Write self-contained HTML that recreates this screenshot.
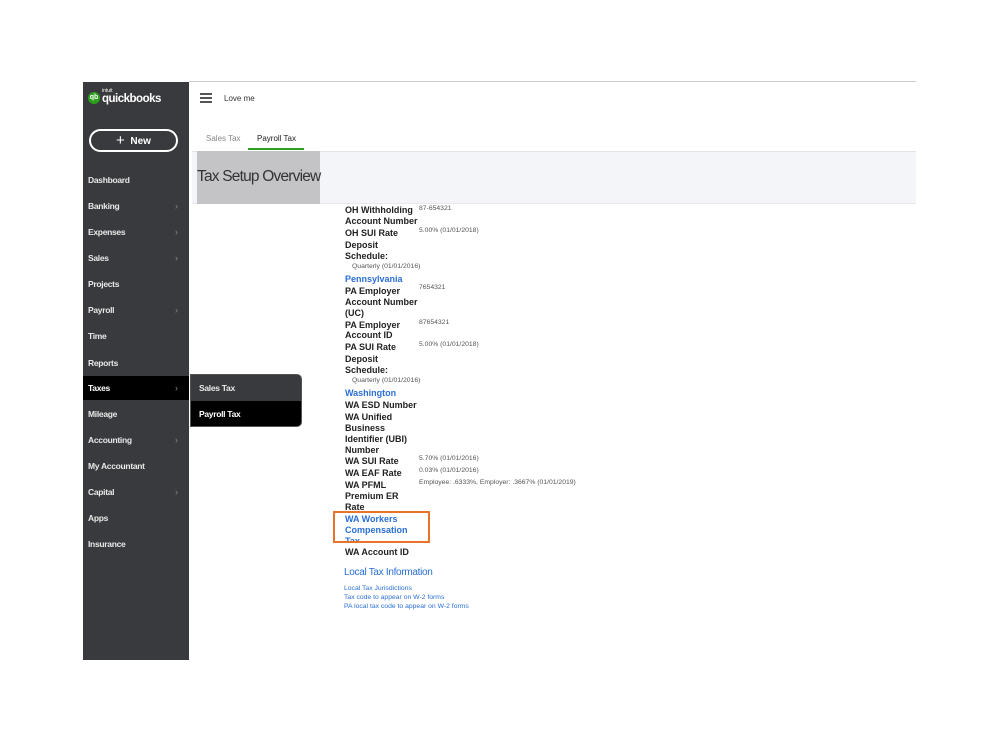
<!DOCTYPE html>
<html><head><meta charset="utf-8"><style>
*{margin:0;padding:0;box-sizing:border-box}
body{width:999px;height:749px;background:#fff;position:relative;overflow:hidden;font-family:"Liberation Sans",sans-serif}
.a{position:absolute;white-space:nowrap}
.sb{position:absolute;left:83px;top:82px;width:106px;height:578px;background:#393a3d}
.si{position:absolute;left:88px;color:#e8e8e8;font-size:8.5px;font-weight:bold;line-height:12px;letter-spacing:-0.3px}
.ch{position:absolute;left:175px;color:#888;font-size:9px;line-height:12px}
.l{position:absolute;left:345px;font-size:9px;font-weight:bold;color:#222;line-height:12px;letter-spacing:0px}
.v{position:absolute;left:419px;font-size:6.8px;color:#555;line-height:10px}
.q{position:absolute;left:352px;font-size:6.8px;color:#555;line-height:10px}
.b{position:absolute;left:345px;font-size:9px;font-weight:bold;color:#2a6fd6;line-height:12px}
.lk{position:absolute;left:344px;font-size:6.8px;color:#2a6fd6;line-height:9px}
</style></head><body>
<div class="a" style="left:189px;top:81px;width:727px;height:1px;background:#ccc"></div>
<div class="sb"></div>
<div class="a" style="left:88px;top:92px;width:12px;height:12px;border-radius:50%;background:#2ca01c;color:#fff;font-size:7px;font-weight:bold;text-align:center;line-height:12px">qb</div>
<div class="a" style="left:102px;top:88px;color:#fff;font-size:5px">intuit</div>
<div class="a" style="left:102px;top:93px;color:#fff;font-size:11.5px;font-weight:bold;letter-spacing:-0.5px">quickbooks</div>
<div class="a" style="left:89px;top:129px;width:89px;height:23px;border:2px solid #fff;border-radius:12px;color:#fff;font-size:10px;font-weight:bold;text-align:center;line-height:19px"><span style="font-size:15px;font-weight:normal;vertical-align:-1px">+</span>&nbsp; New</div>
<div class="si" style="top:174px">Dashboard</div>
<div class="si" style="top:200px">Banking</div><div class="ch" style="top:200px">›</div>
<div class="si" style="top:226px">Expenses</div><div class="ch" style="top:226px">›</div>
<div class="si" style="top:252px">Sales</div><div class="ch" style="top:252px">›</div>
<div class="si" style="top:278px">Projects</div>
<div class="si" style="top:304px">Payroll</div><div class="ch" style="top:304px">›</div>
<div class="si" style="top:330px">Time</div>
<div class="si" style="top:357px">Reports</div>
<div class="a" style="left:83px;top:376px;width:106px;height:24px;background:#000"></div>
<div class="si" style="top:382px;color:#fff">Taxes</div><div class="ch" style="top:382px">›</div>
<div class="si" style="top:408px">Mileage</div>
<div class="si" style="top:434px">Accounting</div><div class="ch" style="top:434px">›</div>
<div class="si" style="top:460px">My Accountant</div>
<div class="si" style="top:486px">Capital</div><div class="ch" style="top:486px">›</div>
<div class="si" style="top:512px">Apps</div>
<div class="si" style="top:538px">Insurance</div>
<div class="a" style="left:190px;top:374px;width:112px;height:53px;background:#393a3d;border-radius:0 5px 5px 0;overflow:hidden;border:1px solid #555">
<div style="position:absolute;left:0;top:26px;width:112px;height:27px;background:#000"></div>
<div class="si" style="left:8px;top:7px">Sales Tax</div>
<div class="si" style="left:8px;top:33px;color:#fff">Payroll Tax</div></div>
<div class="a" style="left:200px;top:93px;width:12px;height:2px;background:#555;box-shadow:0 4px 0 #555,0 8px 0 #555"></div>
<div class="a" style="left:224px;top:94px;font-size:8px;color:#333">Love me</div>
<div class="a" style="left:206px;top:134px;font-size:8px;color:#888">Sales Tax</div>
<div class="a" style="left:257px;top:134px;font-size:8px;color:#222">Payroll Tax</div>
<div class="a" style="left:248px;top:148px;width:56px;height:2px;background:#2ca01c"></div>
<div class="a" style="left:192px;top:151px;width:724px;height:53px;background:#f4f5f8;border-top:1px solid #e4e4e4;border-bottom:1px solid #e8e8e8"></div>
<div class="a" style="left:197px;top:151px;width:123px;height:53px;background:#c4c4c6"></div>
<div class="a" style="left:197px;top:168px;font-size:15.5px;color:#333;letter-spacing:-0.8px">Tax Setup Overview</div>
<div class="l" style="top:204px">OH Withholding</div><div class="v" style="top:204px">87-654321</div>
<div class="l" style="top:215px">Account Number</div>
<div class="l" style="top:227px">OH SUI Rate</div><div class="v" style="top:226px">5.00% (01/01/2018)</div>
<div class="l" style="top:239px">Deposit</div>
<div class="l" style="top:250px">Schedule:</div>
<div class="q" style="top:262px">Quarterly (01/01/2016)</div>
<div class="b" style="top:273px">Pennsylvania</div>
<div class="l" style="top:285px">PA Employer</div><div class="v" style="top:283px">7654321</div>
<div class="l" style="top:296px">Account Number</div>
<div class="l" style="top:307px">(UC)</div>
<div class="l" style="top:319px">PA Employer</div><div class="v" style="top:318px">87654321</div>
<div class="l" style="top:329px">Account ID</div>
<div class="l" style="top:341px">PA SUI Rate</div><div class="v" style="top:340px">5.00% (01/01/2018)</div>
<div class="l" style="top:353px">Deposit</div>
<div class="l" style="top:364px">Schedule:</div>
<div class="q" style="top:376px">Quarterly (01/01/2016)</div>
<div class="b" style="top:387px">Washington</div>
<div class="l" style="top:399px">WA ESD Number</div>
<div class="l" style="top:411px">WA Unified</div>
<div class="l" style="top:422px">Business</div>
<div class="l" style="top:433px">Identifier (UBI)</div>
<div class="l" style="top:444px">Number</div>
<div class="l" style="top:455px">WA SUI Rate</div><div class="v" style="top:454px">5.70% (01/01/2016)</div>
<div class="l" style="top:467px">WA EAF Rate</div><div class="v" style="top:466px">0.03% (01/01/2016)</div>
<div class="l" style="top:479px">WA PFML</div><div class="v" style="top:478px">Employee: .6333%, Employer: .3667% (01/01/2019)</div>
<div class="l" style="top:490px">Premium ER</div>
<div class="l" style="top:501px">Rate</div>
<div class="a" style="left:345px;top:513px;height:28px;overflow:hidden;width:80px">
<div class="b" style="left:0;top:0">WA Workers</div>
<div class="b" style="left:0;top:11px">Compensation</div>
<div class="b" style="left:0;top:22px">Tax</div></div>
<div class="a" style="left:333px;top:511px;width:97px;height:32px;border:2px solid #e8742a"></div>
<div class="l" style="top:546px">WA Account ID</div>
<div class="a" style="left:344px;top:567px;font-size:10px;color:#2a6fd6;letter-spacing:-0.3px">Local Tax Information</div>
<div class="lk" style="top:584px">Local Tax Jurisdictions</div>
<div class="lk" style="top:593px">Tax code to appear on W-2 forms</div>
<div class="lk" style="top:602px">PA local tax code to appear on W-2 forms</div>
</body></html>
